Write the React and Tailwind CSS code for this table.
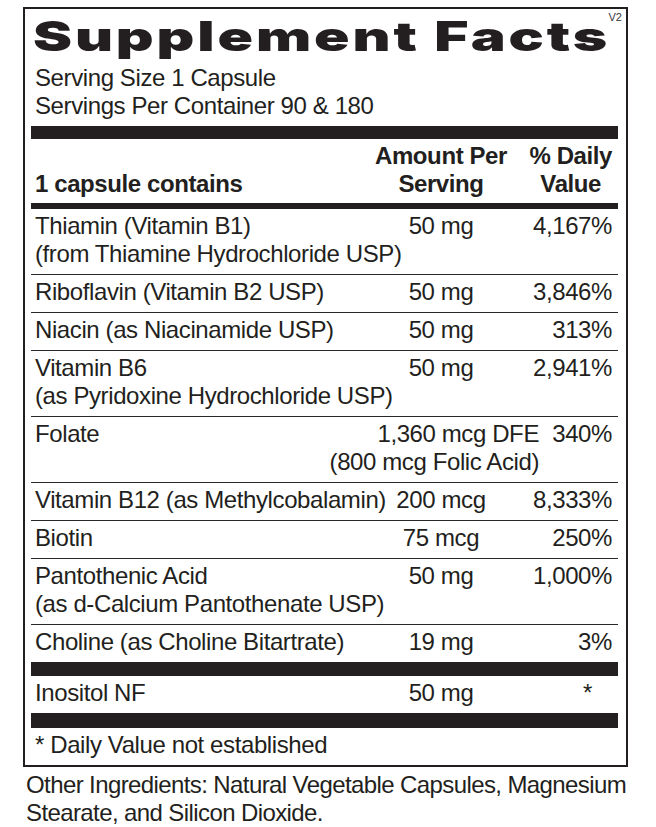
import React from "react";

const rows = [
  { lines: ["Thiamin (Vitamin B1)", "(from Thiamine Hydrochloride USP)"], amt: "50 mg", dv: "4,167%" },
  { lines: ["Riboflavin (Vitamin B2 USP)"], amt: "50 mg", dv: "3,846%" },
  { lines: ["Niacin (as Niacinamide USP)"], amt: "50 mg", dv: "313%" },
  { lines: ["Vitamin B6", "(as Pyridoxine Hydrochloride USP)"], amt: "50 mg", dv: "2,941%" },
  { folate: true },
  { lines: ["Vitamin B12 (as Methylcobalamin)"], amt: "200 mcg", dv: "8,333%" },
  { lines: ["Biotin"], amt: "75 mcg", dv: "250%" },
  { lines: ["Pantothenic Acid", "(as d-Calcium Pantothenate USP)"], amt: "50 mg", dv: "1,000%" },
  { lines: ["Choline (as Choline Bitartrate)"], amt: "19 mg", dv: "3%" },
];

function Row({ r, last }) {
  const border = last ? "" : "border-b border-[#2b2829]";
  if (r.folate) {
    return (
      <div className={`pl-[4px] pr-[6px] pt-[3px] pb-[6px] ${border}`}>
        <div className="flex">
          <div className="flex-1 whitespace-nowrap">Folate</div>
          <div className="whitespace-nowrap">1,360 mcg DFE</div>
          <div className="w-[73px] text-right whitespace-nowrap">340%</div>
        </div>
        <div className="pr-[73px] text-right whitespace-nowrap">(800 mcg Folic Acid)</div>
      </div>
    );
  }
  return (
    <div className={`pl-[4px] pr-[6px] pt-[3px] pb-[6px] ${border}`}>
      <div className="flex">
        <div className="flex-1 min-w-0 whitespace-nowrap">{r.lines[0]}</div>
        <div className="w-[120px] text-center whitespace-nowrap">{r.amt}</div>
        <div className="w-[111px] text-right whitespace-nowrap">{r.dv}</div>
      </div>
      {r.lines[1] && <div className="whitespace-nowrap">{r.lines[1]}</div>}
    </div>
  );
}

export default function App() {
  return (
    <div className="w-[656px] h-[827px] overflow-hidden bg-white text-[#231f20] font-['Liberation_Sans',Arial,sans-serif] text-[24px] leading-[28px] tracking-[-0.4px]">
      <div className="pt-[7px] pl-[23px] pr-[28px]">
        <div className="relative border-2 border-[#231f20] pl-[6px] pr-[8px]">
          <div className="absolute top-[3px] right-[4px] text-[11px] leading-[11px] tracking-normal text-[#3a3637]">V2</div>
          <div className="pt-[7px] pl-[2px] h-[48px] whitespace-nowrap">
            <span className="inline-block origin-left scale-x-[1.43] font-['Inter',sans-serif] font-black text-[41px] leading-[41px] tracking-[2px]">
              Supplement Facts
            </span>
          </div>
          <div className="mt-[7px] pl-[4px]">
            <div>Serving Size 1 Capsule</div>
            <div>Servings Per Container 90 &amp; 180</div>
          </div>
          <div className="mt-[6px] h-[13px] bg-[#231f20]" />
          <div className="mt-[3px] pl-[4px] pr-[6px] flex font-bold">
            <div className="flex-1 flex flex-col justify-end whitespace-nowrap">1 capsule contains</div>
            <div className="w-[140px] text-center whitespace-nowrap">
              <div>Amount Per</div>
              <div>Serving</div>
            </div>
            <div className="w-[101px] text-right whitespace-nowrap">
              <div className="inline-block text-center">
                <div>% Daily</div>
                <div>Value</div>
              </div>
            </div>
          </div>
          <div className="mt-[5px] h-[6px] bg-[#231f20]" />
          {rows.map((r, i) => (
            <Row key={i} r={r} last={i === rows.length - 1} />
          ))}
          <div className="h-[14px] bg-[#231f20]" />
          <div className="pl-[4px] pr-[6px] pt-[3px] pb-[6px] flex">
            <div className="flex-1 whitespace-nowrap">Inositol NF</div>
            <div className="w-[120px] text-center whitespace-nowrap">50 mg</div>
            <div className="w-[111px] text-right pr-[20px]">*</div>
          </div>
          <div className="h-[15px] bg-[#231f20]" />
          <div className="pl-[4px] pt-[3px] pb-[6px] whitespace-nowrap">* Daily Value not established</div>
        </div>
        <div className="mt-[4px] pl-[3px] whitespace-nowrap tracking-[-0.6px]">
          <div>Other Ingredients: Natural Vegetable Capsules, Magnesium</div>
          <div>Stearate, and Silicon Dioxide.</div>
        </div>
      </div>
    </div>
  );
}
